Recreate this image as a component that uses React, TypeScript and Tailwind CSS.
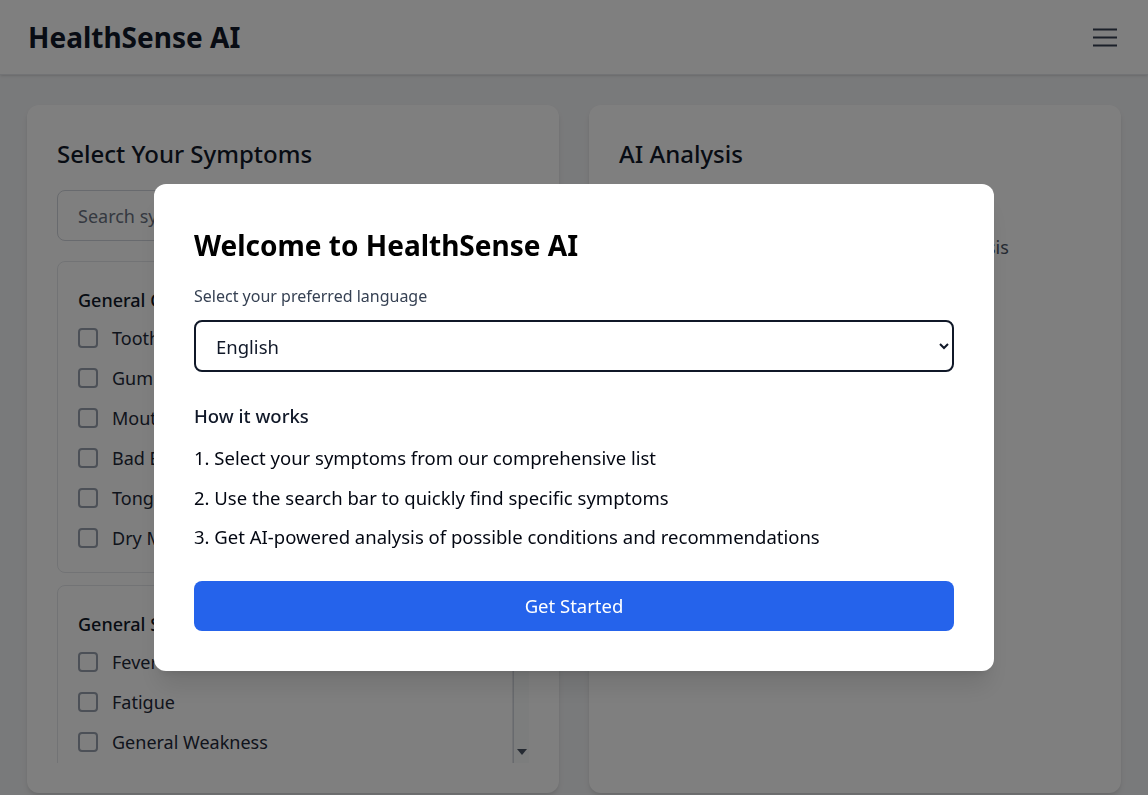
import { useState } from "react";

const CATEGORIES = [
  {
    name: "General Oral Health",
    items: ["Toothache", "Gum Bleeding", "Mouth Ulcers", "Bad Breath", "Tongue Discoloration", "Dry Mouth"],
  },
  {
    name: "General Symptoms",
    items: ["Fever", "Fatigue", "General Weakness", "Chills", "Night Sweats"],
  },
];

const STEPS = [
  "1. Select your symptoms from our comprehensive list",
  "2. Use the search bar to quickly find specific symptoms",
  "3. Get AI-powered analysis of possible conditions and recommendations",
];

export default function App() {
  const [open, setOpen] = useState(true);
  const [lang, setLang] = useState("en");

  return (
    <div className="min-h-screen bg-gray-100 text-gray-900 font-['Noto_Sans',sans-serif]">
      {/* top bar */}
      <header className="h-[75px] bg-white border-b border-gray-200 shadow-sm flex items-center justify-between pl-7 pr-[31px]">
        <h1 className="text-[28px] font-bold text-gray-900">HealthSense AI</h1>
        <button aria-label="Menu" className="text-gray-700">
          <svg width="24" height="19" viewBox="0 0 24 19" fill="none" stroke="currentColor" strokeWidth="2">
            <path d="M0 1.5h24M0 9.5h24M0 17.5h24" />
          </svg>
        </button>
      </header>

      <main className="grid grid-cols-2 gap-[30px] px-[27px] pt-[30px]">
        {/* symptoms */}
        <section className="bg-white rounded-xl shadow-md px-[30px] pt-[33px] pb-[30px] h-[688px] flex flex-col">
          <h2 className="text-2xl font-medium mb-5">Select Your Symptoms</h2>
          <input
            placeholder="Search symptoms..."
            className="w-full h-[51px] rounded-lg border border-gray-300 px-5 text-lg placeholder:text-gray-500 mb-5"
          />
          <div className="flex-1 flex min-h-0">
            <div className="flex-1 overflow-hidden">
              {CATEGORIES.map((cat) => (
                <div key={cat.name} className="border border-gray-200 rounded-lg px-5 pt-6 pb-[14px] mb-3">
                  <h3 className="text-lg font-medium leading-7 mb-1">{cat.name}</h3>
                  {cat.items.map((s) => (
                    <label key={s} className="flex items-center gap-[14px] h-10 text-lg text-gray-800">
                      <span className="w-5 h-5 rounded border-2 border-gray-400 bg-white" />
                      {s}
                    </label>
                  ))}
                </div>
              ))}
            </div>
            {/* scrollbar */}
            <div className="w-[16px] border-l border-gray-300 bg-gray-50 flex flex-col justify-end items-center pb-2">
              <span className="w-0 h-0 border-l-[5px] border-r-[5px] border-t-[6px] border-l-transparent border-r-transparent border-t-gray-600" />
            </div>
          </div>
        </section>

        {/* analysis */}
        <section className="bg-white rounded-xl shadow-md px-[30px] pt-[33px] pb-[30px] h-[688px]">
          <h2 className="text-2xl font-medium">AI Analysis</h2>
          <p className="text-lg text-gray-600 text-center mt-[63px] pl-4">Select symptoms to get AI analysis</p>
        </section>
      </main>

      {open && (
        <div className="fixed inset-0 bg-black/50 flex justify-center items-start pt-[184px]">
          <div className="w-[840px] bg-white rounded-xl p-10 shadow-xl">
            <h2 className="text-[28px] font-bold text-black mb-[18px]">Welcome to HealthSense AI</h2>
            <label className="block text-base text-gray-700 mb-3">Select your preferred language</label>
            <select
              value={lang}
              onChange={(e) => setLang(e.target.value)}
              className="w-full h-[52px] rounded-lg border-2 border-gray-900 pl-4 pr-3 text-[18.5px] bg-white mb-[30px]"
            >
              <option value="en">English</option>
              <option value="hi">हिन्दी</option>
              <option value="es">Español</option>
            </select>
            <h3 className="text-[18.5px] font-medium mb-[14px]">How it works</h3>
            <ul className="text-[18.5px] text-gray-950 space-y-3 mb-[30px]">
              {STEPS.map((s) => (
                <li key={s}>{s}</li>
              ))}
            </ul>
            <button
              onClick={() => setOpen(false)}
              className="w-full h-[50px] rounded-lg bg-[#2563eb] text-white text-[18.5px]"
            >
              Get Started
            </button>
          </div>
        </div>
      )}
    </div>
  );
}
